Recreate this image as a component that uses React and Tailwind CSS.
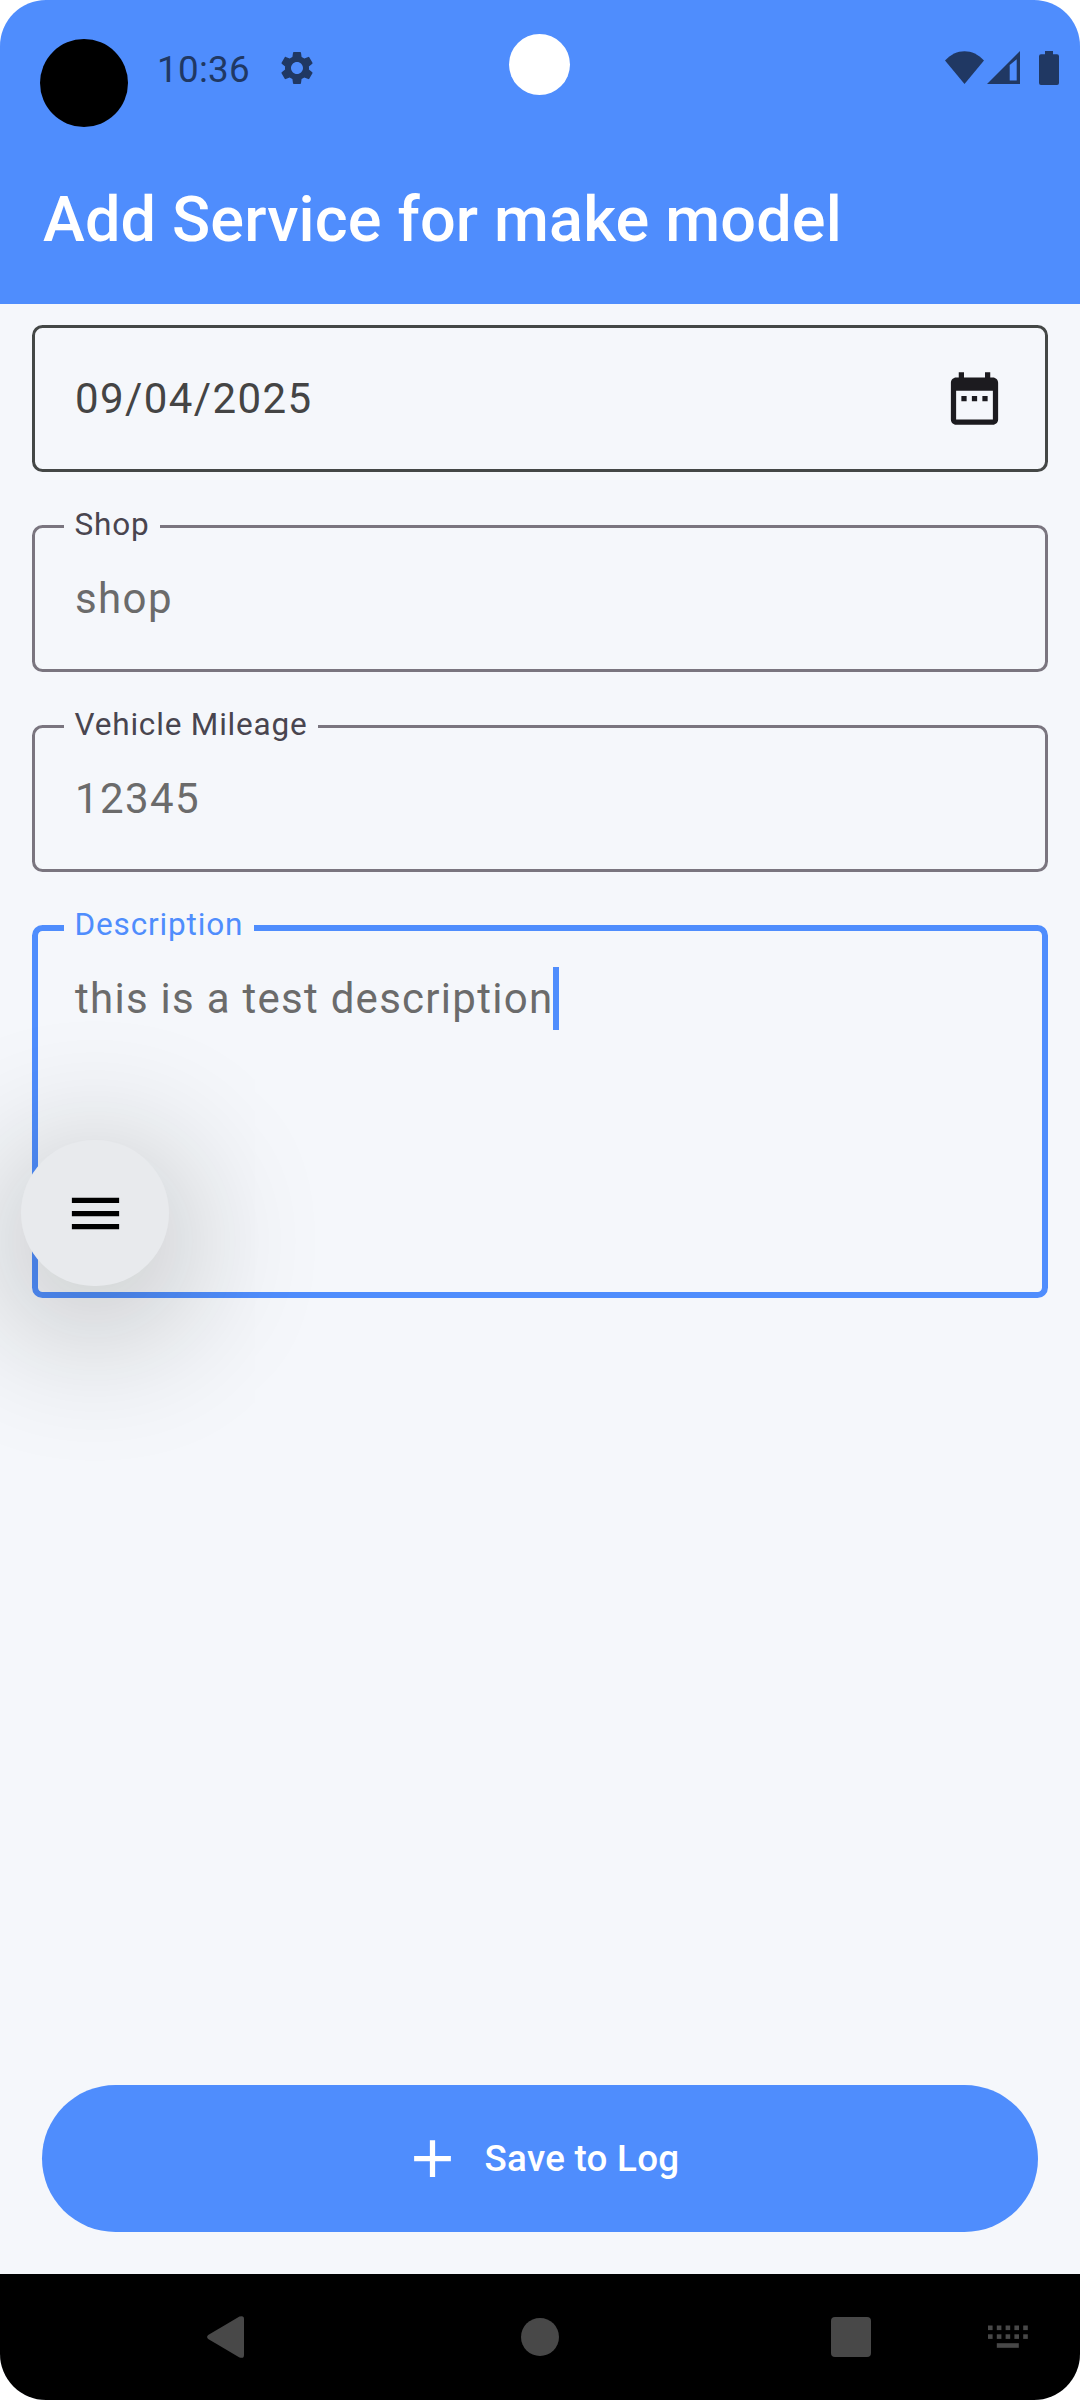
import React from "react";

function StatusBar() {
  return (
    <div className="relative flex h-[136px] items-start pl-10 pr-[21px] text-[#203863]">
      <div className="mt-[39px] size-[88px] shrink-0 rounded-full bg-black" />
      <span className="ml-[29px] mt-12 w-[92px] whitespace-nowrap text-[36.75px] leading-[43px] tracking-[0.3px]">10:36</span>
      <svg className="ml-[28px] mt-12 size-10" viewBox="0 0 24 24" fill="currentColor">
        <path d="M19.14 12.94c.04-.3.06-.61.06-.94 0-.32-.02-.64-.07-.94l2.03-1.58a.49.49 0 0 0 .12-.61l-1.92-3.32a.488.488 0 0 0-.59-.22l-2.39.96c-.5-.38-1.03-.7-1.62-.94l-.36-2.54a.484.484 0 0 0-.48-.41h-3.84c-.24 0-.43.17-.47.41l-.36 2.54c-.59.24-1.13.57-1.62.94l-2.39-.96c-.22-.08-.47 0-.59.22L2.74 8.87c-.12.21-.08.47.12.61l2.03 1.58c-.05.3-.09.63-.09.94s.02.64.07.94l-2.03 1.58a.49.49 0 0 0-.12.61l1.92 3.32c.12.22.37.29.59.22l2.39-.96c.5.38 1.03.7 1.62.94l.36 2.54c.05.24.24.41.48.41h3.84c.24 0 .44-.17.47-.41l.36-2.54c.59-.24 1.13-.56 1.62-.94l2.39.96c.22.08.47 0 .59-.22l1.92-3.32c.12-.22.07-.47-.12-.61l-2.01-1.58zM12 15.6c-1.98 0-3.6-1.62-3.6-3.6s1.62-3.6 3.6-3.6 3.6 1.62 3.6 3.6-1.62 3.6-3.6 3.6z" />
      </svg>
      <div className="absolute left-[509px] top-[34px] size-[61px] rounded-full bg-white" />
      <div className="ml-auto mt-[51px] flex">
        <svg className="h-[34px] w-[39px]" viewBox="0 0 39 34" fill="currentColor">
          <path d="M0 9.5C11-3 28-3 39 9.5L19.5 33z" />
        </svg>
        <svg className="ml-[3px] h-[34px] w-[33px]" viewBox="0 0 33 34" fill="currentColor">
          <path fillRule="evenodd" d="M0 33L33 0v33zM22.7 14v15.5h7V8.2z" />
        </svg>
        <svg className="ml-[19px] h-[34px] w-5" viewBox="0 0 20 34" fill="currentColor">
          <path d="M6 0h8v3.3h4q2 0 2 2V32q0 2-2 2H2q-2 0-2-2V5.300q0-2 2-2h4z" />
        </svg>
      </div>
    </div>
  );
}

function Field({ label, value }) {
  return (
    <div className="relative flex h-[147px] items-center rounded-[10.5px] border-[3px] border-[#7a757f] pl-[40px]">
      <span className="absolute -top-[24px] left-[29px] bg-[#f5f7fb] px-[10.5px] text-[31.5px] leading-[42px] tracking-[0.82px] text-[#49454f]">
        {label}
      </span>
      <span className="text-[42px] leading-[63px] tracking-[1.4px] text-[#6b6b6b]">{value}</span>
    </div>
  );
}

function NavBar() {
  const columns = [0, 8.8, 17.6, 26.4, 35.2];
  return (
    <nav className="flex h-[126px] items-center bg-black pl-[207px] text-[#484848]">
      <svg className="h-[42px] w-[37px]" viewBox="0 0 37 42" fill="currentColor">
        <path d="M1.2 19L32.500.6Q37-1 37 3V39Q37 43 32.500 41.400L1.200 23Q-1 21 1.200 19z" />
      </svg>
      <div className="ml-[277px] size-[38px] rounded-full bg-[#484848]" />
      <div className="ml-[272px] size-10 rounded-[4px] bg-[#484848]" />
      <svg className="ml-[117px] h-6 w-10" viewBox="0 0 40 24" fill="currentColor">
        {columns.map((x) => (
          <g key={x}>
            <rect x={x} y="0.5" width="4.600" height="4.600" />
            <rect x={x} y="9.300" width="4.600" height="4.600" />
          </g>
        ))}
        <rect x="8.800" y="18.200" width="22" height="4.600" />
      </svg>
    </nav>
  );
}

export default function App() {
  return (
    <div className="h-[2400px] w-[1080px] bg-white font-['Roboto',sans-serif]">
      <div className="relative flex h-full flex-col overflow-hidden rounded-[46px] bg-[#f5f7fb]">
        <header className="h-[304px] shrink-0 bg-[#4f8dfd]">
          <StatusBar />
          <h1 className="pl-[43px] pt-[42px] text-[63px] font-medium leading-[84px] tracking-[0.15px] text-white">
            Add Service for make model
          </h1>
        </header>

        <main className="flex flex-1 flex-col px-8 pt-[21px]">
          <div className="flex h-[147px] items-center justify-between rounded-[10.5px] border-[3px] border-[#444746] pl-[40px] pr-[39px]">
            <span className="text-[42px] leading-[63px] tracking-[1.4px] text-[#444444]">09/04/2025</span>
            <svg className="size-[63px]" viewBox="0 0 24 24" fill="#1c1b1f">
              <path d="M9 11H7v2h2v-2zm4 0h-2v2h2v-2zm4 0h-2v2h2v-2zm2-7h-1V2h-2v2H8V2H6v2H5c-1.110 0-1.990.9-1.990 2L3 20c0 1.100.890 2 2 2h14c1.100 0 2-.9 2-2V6c0-1.100-.9-2-2-2zm0 16H5V9h14v11z" />
            </svg>
          </div>
          <div className="mt-[53px]">
            <Field label="Shop" value="shop" />
          </div>
          <div className="mt-[53px]">
            <Field label="Vehicle Mileage" value="12345" />
          </div>
          <div className="relative mt-[53px] flex h-[373px] items-start rounded-[10.5px] border-[6px] border-[#4f8dfd] pl-[37px] pt-9">
            <span className="absolute -top-[27px] left-[26px] bg-[#f5f7fb] px-[10.5px] text-[31.5px] leading-[42px] tracking-[0.85px] text-[#4f8dfd]">
              Description
            </span>
            <span className="text-[42px] leading-[63px] tracking-[1.27px] text-[#6b6b6b]">this is a test description</span>
            <span className="h-[63px] w-[5.5px] bg-[#4f8dfd]" />
          </div>
          <button className="mx-[10px] mb-[42px] mt-auto flex h-[147px] items-center justify-center rounded-full bg-[#4f8dfd] text-white">
            <svg className="size-[63px]" viewBox="0 0 24 24" fill="currentColor">
              <path d="M19 13h-6v6h-2v-6H5v-2h6V5h2v6h6v2z" />
            </svg>
            <span className="ml-[21px] text-[36.75px] font-medium leading-[52px] tracking-[0.26px]">Save to Log</span>
          </button>
        </main>

        <button className="absolute left-[21px] top-[1140px] flex h-[146px] w-[148px] items-center justify-center rounded-full bg-[#e8eaed] shadow-[0_28px_140px_20px_rgba(20,24,12,0.24)]">
          <svg className="size-[63px]" viewBox="0 0 24 24" fill="black">
            <path d="M3 18h18v-2H3v2zm0-5h18v-2H3v2zm0-7v2h18V6H3z" />
          </svg>
        </button>

        <NavBar />
      </div>
    </div>
  );
}
